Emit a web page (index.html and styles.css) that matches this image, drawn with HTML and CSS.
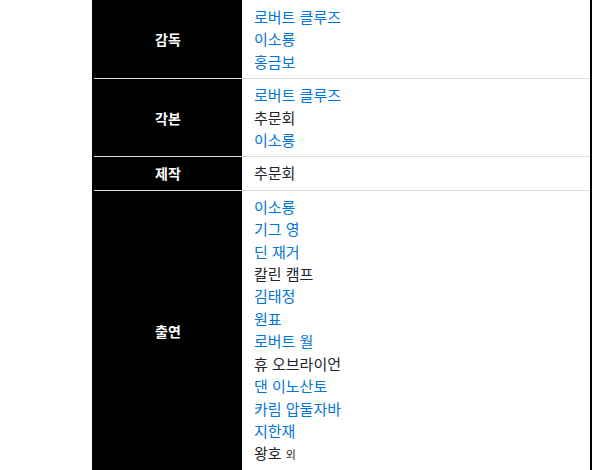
FILE: index.html
```html
<!DOCTYPE html>
<html lang="ko">
<head>
  <meta charset="UTF-8" />
  <title>제작진</title>
  <meta name="viewport" content="width=device-width, initial-scale=1.0" />
  <link rel="stylesheet" href="styles.css">
</head>
<body>

  <table class="credits">
    <tr class="first">
      <th>감독</th>
      <td>
        <a href="#">로버트 클루즈</a><br>
        <a href="#">이소룡</a><br>
        <a href="#">홍금보</a>
      </td>
    </tr>
    <tr>
      <th>각본</th>
      <td>
        <a href="#">로버트 클루즈</a><br>
        추문회<br>
        <a href="#">이소룡</a>
      </td>
    </tr>
    <tr>
      <th>제작</th>
      <td>추문회</td>
    </tr>
    <tr>
      <th>출연</th>
      <td>
        <a href="#">이소룡</a><br>
        <a href="#">기그 영</a><br>
        <a href="#">딘 재거</a><br>
        칼린 캠프<br>
        <a href="#">김태정</a><br>
        <a href="#">원표</a><br>
        <a href="#">로버트 월</a><br>
        휴 오브라이언<br>
        <a href="#">댄 이노산토</a><br>
        <a href="#">카림 압둘자바</a><br>
        <a href="#">지한재</a><br>
        왕호 <small>외</small>
      </td>
    </tr>
  </table>

</body>
</html>
```

FILE: styles.css
```css
body {
  margin: 0;
  padding: 0;
  background: #fff;
  font-family: "Noto Sans CJK KR", "Noto Sans", sans-serif;
  font-size: 15px;
  line-height: 22.4px;
  color: #212529;
}
.credits {
  margin-left: 92px;
  width: 500px;
  border-collapse: separate;
  border-spacing: 0;
  border-left: 2px solid #000;
  border-right: 2px solid #000;
}
.credits th,
.credits td {
  border-bottom: 1px solid #ddd;
}
.credits th {
  width: 128px;
  padding: 5px 10px;
  background: #000;
  color: #fff;
  font-size: 14px;
  font-weight: bold;
  text-align: center;
  vertical-align: middle;
}
.credits td {
  padding: 5px 11px 5px 12px;
  text-align: left;
  vertical-align: top;
}
.credits .first th,
.credits .first td {
  padding-top: 6px;
}
.credits a {
  color: #0275d8;
  text-decoration: none;
}
.credits small {
  font-size: 11px;
}
```
